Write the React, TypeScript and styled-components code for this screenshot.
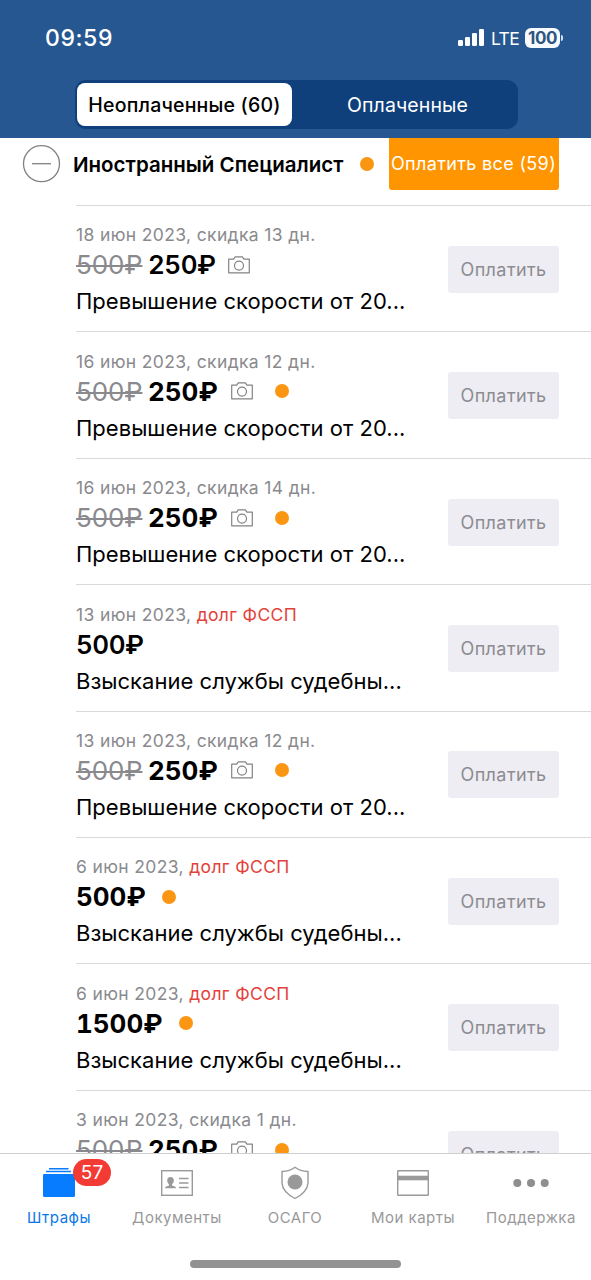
import React from "react";
import styled, { createGlobalStyle } from "styled-components";

const GlobalStyle = createGlobalStyle`
  * { box-sizing: border-box; }
  body { margin: 0; background: #fff; }
  button { font: inherit; border: 0; margin: 0; padding: 0; cursor: pointer; }
`;

const Screen = styled.div`
  display: flex;
  flex-direction: column;
  width: 591px;
  height: 1280px;
  overflow: hidden;
  background: #fff;
  color: #000;
  font-family: Inter, "Liberation Sans", sans-serif;
  font-feature-settings: "calt" 0;
`;

const Header = styled.header`
  flex: none;
  height: 138px;
  background: #265791;
  display: flex;
  flex-direction: column;
`;

const StatusBar = styled.div`
  height: 80px;
  padding: 0 28px 4px 45px;
  display: flex;
  align-items: center;
  justify-content: space-between;
  color: #fff;
`;

const Clock = styled.span`
  font-size: 23px;
  font-weight: 500;
  letter-spacing: 0.6px;
`;

const StatusIcons = styled.div`
  display: flex;
  align-items: center;
`;

const Network = styled.span`
  margin-left: 7px;
  width: 34px;
  font-size: 17.5px;
  letter-spacing: -0.6px;
`;

const Battery = styled.span`
  width: 35px;
  height: 20px;
  margin-bottom: 1px;
  border-radius: 6px;
  background: #f7fbff;
  color: #2f5581;
  font-size: 17px;
  line-height: 20px;
  font-weight: 700;
  letter-spacing: -0.4px;
  text-align: center;
`;

const BatteryTip = styled.span`
  width: 2px;
  height: 6px;
  margin: 0 0 0 1px;
  border-radius: 0 2px 2px 0;
  background: #d5e1ee;
`;

const Segments = styled.div`
  width: 443px;
  height: 49px;
  margin-left: 75px;
  padding: 3px 0 3px 2px;
  border-radius: 11px;
  background: #0f407b;
  display: flex;
`;

const Segment = styled.button<{ $active?: boolean }>`
  width: ${(p) => (p.$active ? "215px" : "auto")};
  flex: ${(p) => (p.$active ? "none" : 1)};
  height: 43px;
  padding-left: ${(p) => (p.$active ? "0" : "5px")};
  border-radius: 8px;
  background: ${(p) => (p.$active ? "#fff" : "transparent")};
  color: ${(p) => (p.$active ? "#000" : "#fff")};
  font-size: 19.5px;
  font-weight: ${(p) => (p.$active ? 500 : 400)};
  letter-spacing: ${(p) => (p.$active ? "0.2px" : "0.1px")};
`;

const List = styled.main`
  flex: 1;
  min-height: 0;
  overflow: hidden;
`;

const GroupHeader = styled.div`
  height: 67px;
  padding: 0 32px 15px 22px;
  display: flex;
  align-items: center;
`;

const GroupName = styled.span`
  width: 287px;
  margin-left: 12px;
  font-size: 20.5px;
  font-weight: 600;
  letter-spacing: 0px;
  white-space: nowrap;
`;

const Dot = styled.i`
  flex: none;
  width: 14px;
  height: 14px;
  border-radius: 50%;
  background: #fa9611;
`;

const PayAll = styled.button`
  width: 170px;
  height: 52px;
  margin-left: auto;
  border-radius: 0 0 3px 3px;
  background: #ff9500;
  color: #fff;
  font-size: 18px;
  letter-spacing: 0.35px;
  white-space: nowrap;
  padding: 0 1px 2px 0;
`;

const Row = styled.section`
  height: 126.4px;
  margin-left: 76px;
  padding-right: 32px;
  border-top: 1px solid #d9d9db;
  display: flex;
  justify-content: space-between;
`;

const Details = styled.div`
  padding-top: 17.4px;
`;

const DateLine = styled.div`
  height: 23px;
  line-height: 23px;
  font-size: 17.5px;
  color: #8a8a8e;
  letter-spacing: 0.36px;
`;

const Debt = styled.span`
  color: #e3413a;
`;

const PriceLine = styled.div`
  height: 37px;
  display: flex;
  align-items: center;
  font-size: 26px;
`;

const OldPrice = styled.span`
  width: 72px;
  color: #8a8a8e;
  letter-spacing: -0.1px;
  text-decoration: line-through;
  text-decoration-thickness: 2px;
`;

const Price = styled.span<{ $unread?: boolean }>`
  font-weight: ${(p) => (p.$unread ? 700 : 600)};
  letter-spacing: ${(p) => (p.$unread ? "0" : "-0.5px")};
  font-variant-numeric: tabular-nums;
`;

const Camera = styled.svg`
  width: 22px;
  height: 18px;
  margin: 0 6px 0 13px;
`;

const UnreadDot = styled(Dot)`
  margin-left: 16px;
`;

const Title = styled.div`
  height: 36px;
  line-height: 36px;
  font-size: 22px;
  letter-spacing: 0.02px;
  white-space: nowrap;
`;

const Pay = styled.button`
  width: 111px;
  height: 47px;
  margin-top: 39.8px;
  border-radius: 3px;
  background: #eeedf3;
  color: #8c8c91;
  font-size: 18px;
  letter-spacing: 0.4px;
`;

const TabBar = styled.nav`
  flex: none;
  height: 127px;
  border-top: 1px solid #cfcfd0;
  background: #fff;
  display: flex;
  flex-direction: column;
  justify-content: space-between;
`;

const Tabs = styled.div`
  display: grid;
  grid-template-columns: repeat(5, 118px);
`;

const Tab = styled.a<{ $active?: boolean }>`
  position: relative;
  display: flex;
  flex-direction: column;
  align-items: center;
  padding-top: 9px;
  font-size: 15px;
  line-height: 20px;
  letter-spacing: 0.5px;
  white-space: nowrap;
  color: ${(p) => (p.$active ? "#0a78e8" : "#99999a")};
`;

const TabIcon = styled.svg`
  width: 40px;
  height: 40px;
  margin-bottom: 4px;
`;

const TabLabel = styled.span`
  padding-top: 1px;
`;

const Badge = styled.span`
  position: absolute;
  left: 73px;
  top: 5px;
  width: 38px;
  height: 27px;
  border-radius: 14px;
  background: #f23b35;
  color: #fff;
  font-size: 19px;
  line-height: 27px;
  letter-spacing: 0;
  text-align: center;
`;

const HomeIndicator = styled.div`
  width: 211px;
  height: 8px;
  margin: 0 0 12px 190px;
  border-radius: 4px;
  background: #929292;
`;

type Fine = {
  date: string;
  discount?: string;
  price: string;
  oldPrice?: string;
  unread?: boolean;
};

const fines: Fine[] = [
  { date: "18 июн 2023", discount: "скидка 13 дн.", oldPrice: "500₽", price: "250₽" },
  { date: "16 июн 2023", discount: "скидка 12 дн.", oldPrice: "500₽", price: "250₽", unread: true },
  { date: "16 июн 2023", discount: "скидка 14 дн.", oldPrice: "500₽", price: "250₽", unread: true },
  { date: "13 июн 2023", price: "500₽" },
  { date: "13 июн 2023", discount: "скидка 12 дн.", oldPrice: "500₽", price: "250₽", unread: true },
  { date: "6 июн 2023", price: "500₽", unread: true },
  { date: "6 июн 2023", price: "1500₽", unread: true },
  { date: "3 июн 2023", discount: "скидка 1 дн.", oldPrice: "500₽", price: "250₽", unread: true },
];

const FineRow = ({ fine }: { fine: Fine }) => (
  <Row>
    <Details>
      <DateLine>
        {fine.date}, {fine.discount ?? <Debt>долг ФССП</Debt>}
      </DateLine>
      <PriceLine>
        {fine.oldPrice && <OldPrice>{fine.oldPrice}</OldPrice>}
        <Price $unread={fine.unread}>{fine.price}</Price>
        {fine.discount && (
          <Camera viewBox="0 0 22 18" fill="none" stroke="#838386" strokeWidth="1.2">
            <path d="M.7 3.2h5L7.2.9h7.2l1.5 2.3h5.4v13.6H.7z" strokeLinejoin="round" />
            <circle cx="11" cy="9.6" r="4.5" />
          </Camera>
        )}
        {fine.unread && <UnreadDot />}
      </PriceLine>
      <Title>{fine.discount ? "Превышение скорости от 20..." : "Взыскание службы судебны..."}</Title>
    </Details>
    <Pay>Оплатить</Pay>
  </Row>
);

export default function App() {
  return (
    <Screen>
      <GlobalStyle />
      <Header>
        <StatusBar>
          <Clock>09:59</Clock>
          <StatusIcons>
            <svg width="26" height="18" viewBox="0 0 26 18" fill="#fff">
              <rect x="0" y="11" width="5" height="6" rx="1.3" />
              <rect x="7" y="8" width="5" height="9" rx="1.3" />
              <rect x="14" y="4" width="5" height="13" rx="1.3" />
              <rect x="21" y="0" width="5" height="17" rx="1.3" />
            </svg>
            <Network>LTE</Network>
            <Battery>100</Battery>
            <BatteryTip />
          </StatusIcons>
        </StatusBar>
        <Segments>
          <Segment $active>Неоплаченные (60)</Segment>
          <Segment>Оплаченные</Segment>
        </Segments>
      </Header>
      <List>
        <GroupHeader>
          <svg width="39" height="39" viewBox="0 0 39 39" fill="none" stroke="#828282" strokeWidth="1.3">
            <circle cx="19.5" cy="18.7" r="18" />
            <path d="M10 18.7h19" />
          </svg>
          <GroupName>Иностранный Специалист</GroupName>
          <Dot />
          <PayAll>Оплатить все (59)</PayAll>
        </GroupHeader>
        {fines.map((fine, i) => (
          <FineRow key={i} fine={fine} />
        ))}
      </List>
      <TabBar>
        <Tabs>
          <Tab $active>
            <TabIcon viewBox="0 0 40 40" fill="#087cff">
              <path d="M10 5h19.500v1.4H10zM7 7.8h25v1.5H7z" />
              <rect x="4" y="11" width="32" height="23" rx="1.2" />
            </TabIcon>
            <TabLabel>Штрафы</TabLabel>
            <Badge>57</Badge>
          </Tab>
          <Tab>
            <TabIcon viewBox="0 0 40 40" fill="none" stroke="#9a9a9a" strokeWidth="1.4">
              <rect x="4.7" y="7.700" width="30.6" height="24.6" />
              <path d="M22 15.500h9.5M22 20h9.500M22 24.500h9.5" />
              <path
                d="M13.500 14c2.300 0 3.300 1.500 3.300 3.500 0 1.800-.8 3-1.700 3.600v1.600c1.600.3 3.900.5 3.900 2.600H8c0-2.100 2.300-2.300 3.900-2.600v-1.600c-.9-.6-1.700-1.800-1.700-3.600 0-2 1-3.500 3.300-3.500z"
                fill="#9a9a9a"
                stroke="none"
              />
            </TabIcon>
            <TabLabel>Документы</TabLabel>
          </Tab>
          <Tab>
            <TabIcon viewBox="0 0 40 40" fill="none" stroke="#999" strokeWidth="1.4">
              <path d="M20 4.2Q25 8.1 33 8.5V20Q32.5 29 20 35.5Q7.5 29 7 20V8.5Q15 8.1 20 4.2z" strokeLinejoin="round" />
              <circle cx="20" cy="19" r="7.5" fill="#999" stroke="none" />
            </TabIcon>
            <TabLabel>ОСАГО</TabLabel>
          </Tab>
          <Tab>
            <TabIcon viewBox="0 0 40 40" fill="none" stroke="#999" strokeWidth="1.4">
              <rect x="4.7" y="7.7" width="30.6" height="24.6" rx=".6" />
              <path d="M5 15h30" strokeWidth="4.6" />
            </TabIcon>
            <TabLabel>Мои карты</TabLabel>
          </Tab>
          <Tab>
            <TabIcon viewBox="0 0 40 40" fill="#8e8e8e">
              <circle cx="6.3" cy="20" r="4" />
              <circle cx="20" cy="20" r="4" />
              <circle cx="33.7" cy="20" r="4" />
            </TabIcon>
            <TabLabel>Поддержка</TabLabel>
          </Tab>
        </Tabs>
        <HomeIndicator />
      </TabBar>
    </Screen>
  );
}
